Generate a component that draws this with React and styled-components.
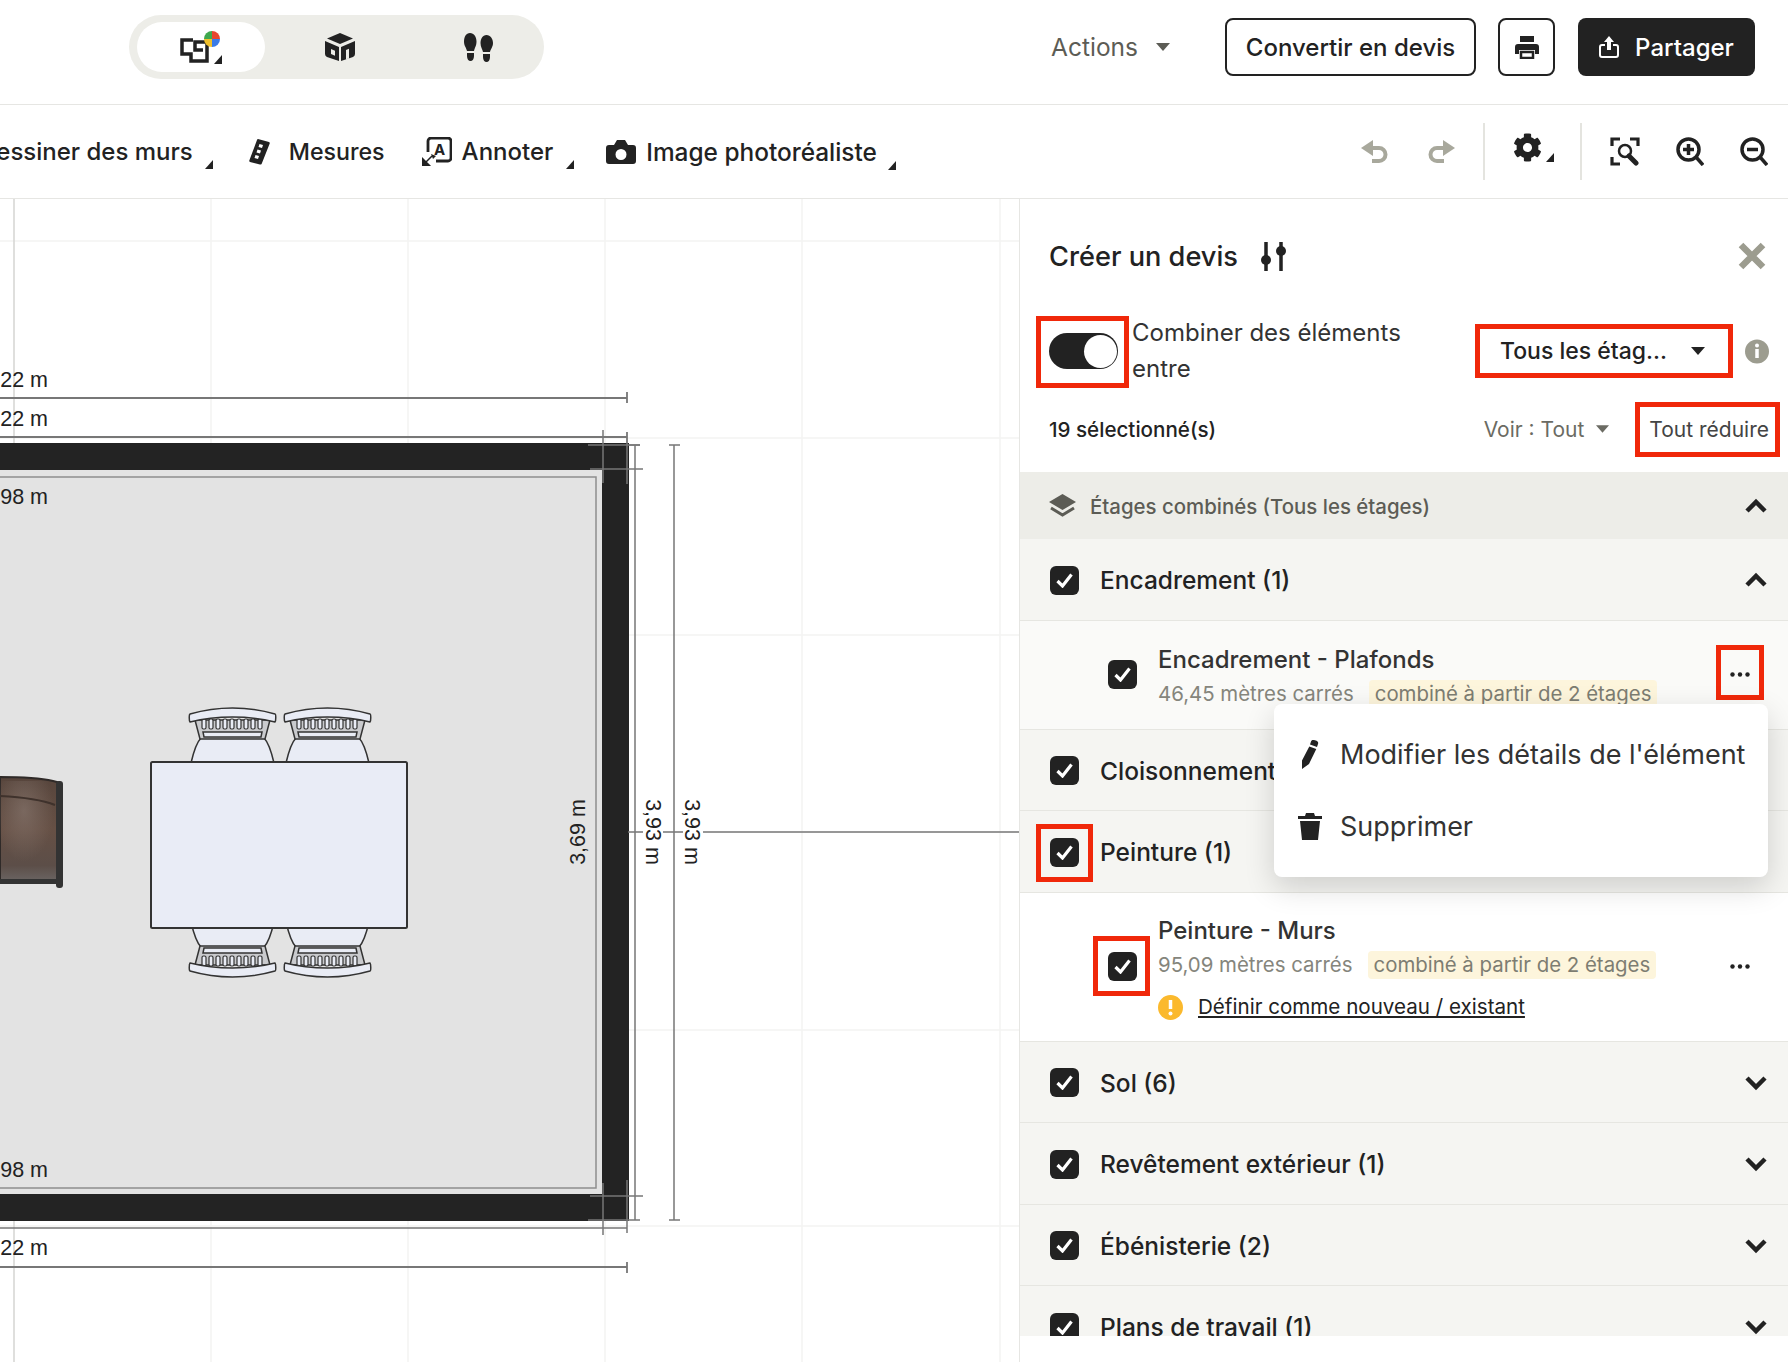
import styled, { createGlobalStyle } from "styled-components";
import { FaCog } from "react-icons/fa";

const GlobalStyle = createGlobalStyle`
  html, body { margin: 0; padding: 0; background: #fff; }
  body { font-family: Inter, "Noto Sans", sans-serif; color: #222; }
`;

const Check = () => (
  <svg width="17" height="15" viewBox="0 0 17 15">
    <path d="M1.500 8l5 5L15.500 1.500" fill="none" stroke="#fff" strokeWidth="3.200" />
  </svg>
);

const Chevron = ({ up }) => (
  <svg width="24" height="16" viewBox="0 0 24 16">
    <path d={up ? "M3 13l9-9 9 9" : "M3 3l9 9 9-9"} fill="none" stroke="#222" strokeWidth="4.500" />
  </svg>
);

const Caret = ({ color = "#222", w = 14 }) => (
  <svg width={w} height="8" viewBox="0 0 14 8">
    <path d="M0 0h14L7 8z" fill={color} />
  </svg>
);

const Corner = () => (
  <svg width="8" height="9" viewBox="0 0 8 9">
    <path d="M8 0v9H0z" fill="#222" />
  </svg>
);

const Dots = () => (
  <svg width="20" height="5" viewBox="0 0 20 5">
    <circle cx="2.500" cy="2.500" r="2.200" fill="#222" />
    <circle cx="10" cy="2.500" r="2.200" fill="#222" />
    <circle cx="17.500" cy="2.500" r="2.200" fill="#222" />
  </svg>
);

const PlanIcon = () => (
  <svg width="42" height="33" viewBox="0 0 42 33">
    <path d="M13 9H2v14h9v7h16V11H15v8h8" fill="none" stroke="#222" strokeWidth="3.500" />
    <path d="M32 0a8 8 0 0 1 8 8h-8z" fill="#e8452f" />
    <path d="M40 8a8 8 0 0 1-8 8V8z" fill="#3a7be8" />
    <path d="M32 16a8 8 0 0 1-8-8h8z" fill="#f0c02c" />
    <path d="M24 8a8 8 0 0 1 8-8v8z" fill="#3fa84f" />
    <path d="M42 24v9h-8z" fill="#222" />
  </svg>
);

const BoxIcon = () => (
  <svg width="30" height="28" viewBox="0 0 30 28">
    <path d="M15 0l13 5.500L15 11 2 5.500z" fill="#222" />
    <path fillRule="evenodd" d="M0 8l14 6v14L2 24q-2-1-2-3zM6 16v5l4 1.700v-5zM30 8v13q0 2-2 3l-12 4V14zM21 17v9.300l3-1V15.700z" fill="#222" />
  </svg>
);

const StepsIcon = () => (
  <svg width="29" height="29" viewBox="0 0 29 29">
    <path d="M6 0c4 0 6.500 4 6.500 8.500S10.500 15 10 18H3c-.5-3-3-5-3-9.500S2 0 6 0zM3 20h7v3c0 3-1.500 5-3.500 5S3 26 3 23z" fill="#222" />
    <path d="M22.500 2c4 0 6.500 4 6.500 8s-2.500 6-3 9h-7c-.5-3-2.500-5-2.500-9s2-8 6-8zM19 21h7v3c0 3-1.500 5-3.500 5S19 27 19 24z" fill="#222" />
  </svg>
);

const PrintIcon = () => (
  <svg width="24" height="23" viewBox="0 0 24 23">
    <path d="M5 0h14v6H5zM3 8h18a3 3 0 0 1 3 3v7h-4v-4H4v4H0v-7a3 3 0 0 1 3-3z" fill="#222" />
    <path d="M6 16h12v6H6z" fill="none" stroke="#222" strokeWidth="2.500" />
  </svg>
);

const ShareIcon = () => (
  <svg width="20" height="22" viewBox="0 0 20 22">
    <path d="M6 9H3a2 2 0 0 0-2 2v8a2 2 0 0 0 2 2h14a2 2 0 0 0 2-2v-8a2 2 0 0 0-2-2h-3" fill="none" stroke="#fff" strokeWidth="2" />
    <path d="M10 0l5 6h-3v8H8V6H5z" fill="#fff" />
  </svg>
);

const RulerIcon = () => (
  <svg width="21" height="26" viewBox="0 0 21 26">
    <path d="M9 0l11 3q1 .5 .7 1.500L13 24q-.5 2-2 1.500L1 23q-1-.5-.7-1.500L8 1q.3-1 1-1z" fill="#222" />
    <path d="M10.500 5l3.500 1-1 3-3.500-1zM8.500 10.500l3.500 1-1 3-3.500-1zM6.500 16l3.500 1-1 3-3.500-1z" fill="#fff" />
  </svg>
);

const AnnotIcon = () => (
  <svg width="30" height="29" viewBox="0 0 30 29">
    <path d="M6 15V4a3 3 0 0 1 3-3h17a3 3 0 0 1 3 3v17a3 3 0 0 1-3 3H14" fill="none" stroke="#222" strokeWidth="2.800" />
    <text x="17.500" y="18" textAnchor="middle" fontFamily="Inter, sans-serif" fontSize="15" fontWeight="700" fill="#222">A</text>
    <path d="M0 29v-8l8 8zM3 26l7-7" fill="#222" stroke="#222" strokeWidth="1.500" />
    <path d="M11 22l-2-5 5 2z" fill="#222" />
  </svg>
);

const CameraIcon = () => (
  <svg width="30" height="24" viewBox="0 0 30 24">
    <path fillRule="evenodd" d="M3 5h5l3-5h8l3 5h5a3 3 0 0 1 3 3v13a3 3 0 0 1-3 3H3a3 3 0 0 1-3-3V8a3 3 0 0 1 3-3zm12 4a5.500 5.500 0 1 0 0 11 5.500 5.500 0 0 0 0-11z" fill="#222" />
  </svg>
);

const HistoryIcon = ({ flip }) => (
  <svg width="27" height="23" viewBox="0 0 27 23" style={flip ? { transform: "scaleX(-1)" } : undefined}>
    <path d="M0 8L12 0v16z" fill="#a8a89c" />
    <path d="M10 8h8a6.500 6.500 0 0 1 0 13h-7" fill="none" stroke="#a8a89c" strokeWidth="4" />
  </svg>
);

const FitIcon = () => (
  <svg width="30" height="29" viewBox="0 0 30 29">
    <path d="M2 9V2h8M20 2h8v7M2 20v7h8" fill="none" stroke="#222" strokeWidth="3.200" />
    <circle cx="15" cy="14" r="6" fill="none" stroke="#222" strokeWidth="2.500" />
    <path d="M19 19l7 7" stroke="#222" strokeWidth="5" strokeLinecap="round" />
  </svg>
);

const ZoomIcon = ({ plus }) => (
  <svg width="28" height="29" viewBox="0 0 28 29">
    <circle cx="12.500" cy="12.500" r="10.500" fill="none" stroke="#222" strokeWidth="3.500" />
    <path d={plus ? "M7 12.500h11M12.500 7v11" : "M7 12.500h11"} stroke="#222" strokeWidth="3.500" />
    <path d="M20 20l7 8" stroke="#222" strokeWidth="3.500" />
  </svg>
);

const SlidersIcon = () => (
  <svg width="26" height="29" viewBox="0 0 26 29">
    <path d="M5 0v29M20 0v29" stroke="#222" strokeWidth="3.500" />
    <circle cx="5" cy="18" r="5" fill="#222" />
    <circle cx="20" cy="9" r="5" fill="#222" />
  </svg>
);

const CloseIcon = () => (
  <svg width="28" height="28" viewBox="0 0 28 28">
    <path d="M3 3l22 22M25 3L3 25" stroke="#9c9c8f" strokeWidth="6.500" />
  </svg>
);

const InfoIcon = () => (
  <svg width="24" height="25" viewBox="0 0 24 25">
    <circle cx="12" cy="12.500" r="12" fill="#9c9c8f" />
    <circle cx="12" cy="6.500" r="2" fill="#fff" />
    <path d="M12 10v9" stroke="#fff" strokeWidth="3.500" />
  </svg>
);

const LayersIcon = () => (
  <svg width="27" height="24" viewBox="0 0 27 24">
    <path d="M13.500 0L27 8l-13.500 8L0 8z" fill="#5c5c55" />
    <path d="M2 14l11.500 7L25 14" fill="none" stroke="#5c5c55" strokeWidth="3" />
  </svg>
);

const WarnIcon = () => (
  <svg width="25" height="25" viewBox="0 0 25 25">
    <circle cx="12.500" cy="12.500" r="12.500" fill="#fbb92d" />
    <path d="M12.500 5v9" stroke="#fff" strokeWidth="3.500" />
    <circle cx="12.500" cy="18.500" r="2" fill="#fff" />
  </svg>
);

const PenIcon = () => (
  <svg width="18" height="29" viewBox="0 0 18 29">
    <path d="M12 0c3 0 6 1.500 5 4l-1 3-7-2.500 1-3C10.400.500 11 0 12 0zM8.300 6.500l7 2.500L8 24l-7 5 0-8.500z" fill="#222" />
  </svg>
);

const TrashIcon = () => (
  <svg width="24" height="27" viewBox="0 0 24 27">
    <path d="M8 0h8l1 3h7v3H0V3h7zM2 8h20l-2 19H4z" fill="#222" />
  </svg>
);

const Chair = ({ x, y, flip }) => {
  const slats = [13, 20, 27, 34, 41, 48, 55, 62, 69];
  return (
    <g transform={flip ? `translate(${x} ${y}) scale(1 -1)` : `translate(${x} ${y})`}>
      <path d="M2 55C5 42 9 33 12 30h63c3 3 7 12 10 25z" fill="#e9ecf5" stroke="#333" strokeWidth="1.500" />
      <path d="M6 12l5 19h65l5-19z" fill="#c9cacd" stroke="#333" strokeWidth="1.500" />
      <path d="M14 24h59l-1 5H15z" fill="#e9ecf5" stroke="#333" strokeWidth="1.500" />
      {slats.map((s) => (
        <rect key={s} x={s} y="11" width="4" height="10" rx="1.500" fill="#e9ecf5" stroke="#333" strokeWidth="1.200" />
      ))}
      <path d="M1 6C15 2 30 0 43.500 0S72 2 86 6c1 0 1 7 0 8-12-3-28-5-42.500-5S13 11 1 14c-1-1-1-8 0-8z" fill="#e9ecf5" stroke="#333" strokeWidth="1.500" />
    </g>
  );
};

const DimLine = ({ d, w = 1.5, c = "#777" }) => <path d={d} stroke={c} strokeWidth={w} fill="none" />;

const FloorPlan = () => (
  <Plan viewBox="0 199 1019 1163">
    <defs>
      <linearGradient id="leather" x1="0" y1="0" x2="0" y2="1">
        <stop offset="0" stopColor="#57453c" />
        <stop offset="0.5" stopColor="#665045" />
        <stop offset="0.85" stopColor="#5c4e48" />
        <stop offset="1" stopColor="#6a6462" />
      </linearGradient>
      <radialGradient id="sheen" cx="0.4" cy="0.3" r="0.5">
        <stop offset="0" stopColor="#8a7a72" stopOpacity="0.6" />
        <stop offset="1" stopColor="#8a7a72" stopOpacity="0" />
      </radialGradient>
    </defs>
    {[211, 408, 605, 802, 1000].map((x) => (
      <line key={x} x1={x} y1="199" x2={x} y2="1362" stroke="#f3f3f2" strokeWidth="1.500" />
    ))}
    {[241, 438, 635, 832, 1030, 1226].map((y) => (
      <line key={y} x1="0" y1={y} x2="1019" y2={y} stroke="#f3f3f2" strokeWidth="1.500" />
    ))}
    <line x1="14" y1="199" x2="14" y2="1362" stroke="#d4d4d2" strokeWidth="1.500" />

    <rect x="0" y="443" width="629" height="778" fill="#232323" />
    <rect x="0" y="470" width="602" height="724" fill="#e3e3e3" />
    <DimLine d="M0 477H596V1188H0" c="#8e8e8e" />

    <DimLine d="M0 398H627M627 392V403" w="1.800" />
    <DimLine d="M0 437H627M627 432V443" w="1.800" />
    <DimLine d="M603 430V483M627 443V484M588 445H640M590 469H643" />
    <DimLine d="M635 445V1220M629 445H640M674 445V1220M669 445H680" />
    <DimLine d="M0 1228H627M627 1180V1233M603 1183V1235M590 1196H643M588 1220H640" w="1.500" />
    <DimLine d="M669 1220H680" />
    <DimLine d="M0 1267H627M627 1262V1273" w="1.800" />
    <DimLine d="M628 832H1019" />

    <rect x="643" y="798" width="20" height="68" fill="#fff" />
    <rect x="683" y="798" width="20" height="68" fill="#fff" />

    <DimText x="48" y="387" textAnchor="end">22 m</DimText>
    <DimText x="48" y="426" textAnchor="end">22 m</DimText>
    <DimText x="48" y="504" textAnchor="end">98 m</DimText>
    <DimText x="48" y="1177" textAnchor="end">98 m</DimText>
    <DimText x="48" y="1255" textAnchor="end">22 m</DimText>
    <DimText transform="translate(585 832) rotate(-90)" textAnchor="middle">3,69 m</DimText>
    <DimText transform="translate(646 832) rotate(90)" textAnchor="middle">3,93 m</DimText>
    <DimText transform="translate(685 832) rotate(90)" textAnchor="middle">3,93 m</DimText>

    <Chair x={189} y={708} />
    <Chair x={284} y={708} />
    <Chair x={189} y={977} flip />
    <Chair x={284} y={977} flip />
    <rect x="151" y="762" width="256" height="166" rx="1.500" fill="#e9ecf6" stroke="#333" strokeWidth="2" />

    <path d="M0 777c20 0 40 1 53 4l8 2v98H0z" fill="url(#leather)" stroke="#2f2a28" strokeWidth="2" />
    <path d="M0 781h60v100H0z" fill="url(#sheen)" />
    <path d="M0 796c20 1 40 3 55 9" fill="none" stroke="#3f322c" strokeWidth="2" />
    <rect x="0" y="879" width="61" height="5" fill="#333" />
    <rect x="56" y="781" width="7" height="107" rx="3" fill="#333" />
  </Plan>
);

const GROUPS_BOTTOM = ["Sol (6)", "Revêtement extérieur (1)", "Ébénisterie (2)", "Plans de travail (1)"];

export default function App() {
  return (
    <Page>
      <GlobalStyle />
      <Header>
        <ViewSwitch>
          <ViewTab $active $width={128}><PlanIcon /></ViewTab>
          <ViewTab $width={150}><BoxIcon /></ViewTab>
          <ViewTab $width={126}><StepsIcon /></ViewTab>
        </ViewSwitch>
        <HeaderRight>
          <ActionsMenu>Actions <Caret color="#5c5c55" /></ActionsMenu>
          <OutlineButton>Convertir en devis</OutlineButton>
          <IconButton><PrintIcon /></IconButton>
          <DarkButton><ShareIcon /> Partager</DarkButton>
        </HeaderRight>
      </Header>

      <Toolbar>
        <ToolGroup>
          <Tool $offset={-21}>Dessiner des murs<CornerWrap><Corner /></CornerWrap></Tool>
          <Tool $offset={36} $gap={19} $size={23.2}><RulerIcon />Mesures</Tool>
          <Tool $offset={37} $gap={10}><AnnotIcon />Annoter<CornerWrap $ml={3}><Corner /></CornerWrap></Tool>
          <Tool $offset={32} $gap={10} $size={24.4}><CameraIcon />Image photoréaliste<CornerWrap $ml={1}><Corner /></CornerWrap></Tool>
        </ToolGroup>
        <ToolIcons>
          <HistoryPair>
            <HistoryIcon />
            <HistoryIcon flip />
          </HistoryPair>
          <Separator />
          <GearWrap><FaCog size={29} color="#222" /><Corner /></GearWrap>
          <Separator />
          <FitIcon />
          <ZoomIcon plus />
          <ZoomIcon />
        </ToolIcons>
      </Toolbar>

      <Main>
        <Canvas><FloorPlan /></Canvas>
        <Panel>
          <TitleRow>
            <Title>Créer un devis</Title>
            <SlidersIcon />
            <CloseWrap><CloseIcon /></CloseWrap>
          </TitleRow>

          <CombineRow>
            <Marked $inset="-17px -11px -19px -13px">
              <Toggle><Knob /></Toggle>
            </Marked>
            <CombineText>Combiner des éléments entre</CombineText>
            <Marked $inset="-13px -28px -13px -25px">
              <FloorSelect>Tous les étag... <Caret /></FloorSelect>
            </Marked>
            <InfoSlot><InfoIcon /></InfoSlot>
          </CombineRow>

          <FilterRow>
            <Selected>19 sélectionné(s)</Selected>
            <FilterRight>
              <ViewFilter>Voir : Tout <Caret color="#6b6b63" w={13} /></ViewFilter>
              <Marked $inset="-15px -11px -15px -14px">
                <Collapse>Tout réduire</Collapse>
              </Marked>
            </FilterRight>
          </FilterRow>

          <List>
            <SectionHead>
              <LayersIcon />
              <SectionLabel>Étages combinés (Tous les étages)</SectionLabel>
              <ChevronSlot><Chevron up /></ChevronSlot>
            </SectionHead>

            <GroupRow>
              <CheckBox><Check /></CheckBox>
              <GroupLabel>Encadrement (1)</GroupLabel>
              <ChevronSlot><Chevron up /></ChevronSlot>
            </GroupRow>

            <ItemRow $bg="#fafaf8" $height={109}>
              <CheckBox><Check /></CheckBox>
              <ItemBody>
                <ItemTitle>Encadrement - Plafonds</ItemTitle>
                <ItemMeta>46,45 mètres carrés<Tag>combiné à partir de 2 étages</Tag></ItemMeta>
              </ItemBody>
              <DotsSlot>
                <Marked $inset="-27px -14px -23px -14px"><Dots /></Marked>
              </DotsSlot>
            </ItemRow>

            <GroupRow>
              <CheckBox><Check /></CheckBox>
              <GroupLabel>Cloisonnement</GroupLabel>
            </GroupRow>

            <GroupRow>
              <Marked $inset="-14px -14px -15px -14px"><CheckBox><Check /></CheckBox></Marked>
              <GroupLabel>Peinture (1)</GroupLabel>
            </GroupRow>

            <ItemRow $bg="#fff" $height={149}>
              <Marked $inset="-16px -13px -15px -15px"><CheckBox><Check /></CheckBox></Marked>
              <ItemBody>
                <ItemTitle>Peinture - Murs</ItemTitle>
                <ItemMeta>95,09 mètres carrés<Tag>combiné à partir de 2 étages</Tag></ItemMeta>
                <WarnRow><WarnIcon /><WarnLink>Définir comme nouveau / existant</WarnLink></WarnRow>
              </ItemBody>
              <DotsSlot><Dots /></DotsSlot>
            </ItemRow>

            {GROUPS_BOTTOM.map((g) => (
              <GroupRow key={g}>
                <CheckBox><Check /></CheckBox>
                <GroupLabel>{g}</GroupLabel>
                <ChevronSlot><Chevron /></ChevronSlot>
              </GroupRow>
            ))}
          </List>

          <Menu>
            <MenuItem><MenuIcon><PenIcon /></MenuIcon>Modifier les détails de l'élément</MenuItem>
            <MenuItem><MenuIcon><TrashIcon /></MenuIcon>Supprimer</MenuItem>
          </Menu>
        </Panel>
      </Main>
    </Page>
  );
}

const Page = styled.div`
  width: 1788px;
  height: 1362px;
  display: flex;
  flex-direction: column;
  overflow: hidden;
  background: #fff;
`;

const Header = styled.header`
  height: 105px;
  flex: none;
  box-sizing: border-box;
  border-bottom: 1.5px solid #e6e6e3;
  display: flex;
  align-items: center;
  justify-content: space-between;
  padding: 0 33px 10px 129px;
`;

const ViewSwitch = styled.div`
  width: 415px;
  height: 64px;
  box-sizing: border-box;
  padding: 7px 8px;
  background: #edede8;
  border-radius: 32px;
  display: flex;
  align-items: center;
`;

const ViewTab = styled.div`
  width: ${(p) => p.$width}px;
  flex: none;
  height: 50px;
  border-radius: 25px;
  background: ${(p) => (p.$active ? "#fff" : "transparent")};
  display: flex;
  align-items: center;
  justify-content: center;
`;

const HeaderRight = styled.div`
  display: flex;
  align-items: center;
`;

const ActionsMenu = styled.div`
  display: flex;
  align-items: center;
  gap: 18px;
  font-size: 24.5px;
  color: #5c5c55;
  margin-right: 55px;
`;

const OutlineButton = styled.button`
  width: 251px;
  height: 58px;
  border: 2px solid #222;
  border-radius: 8px;
  background: #fff;
  color: #222;
  font: 500 24px Inter, sans-serif;
  padding: 0;
`;

const IconButton = styled(OutlineButton)`
  width: 57px;
  margin-left: 22px;
  display: flex;
  align-items: center;
  justify-content: center;
`;

const DarkButton = styled.button`
  width: 177px;
  height: 58px;
  margin-left: 23px;
  border: none;
  border-radius: 8px;
  background: #222;
  color: #fff;
  font: 500 24px Inter, sans-serif;
  display: flex;
  align-items: center;
  justify-content: center;
  gap: 16px;
  padding: 0;
`;

const Toolbar = styled.div`
  height: 94px;
  flex: none;
  box-sizing: border-box;
  border-bottom: 1.5px solid #e6e6e3;
  display: flex;
  align-items: center;
  justify-content: space-between;
  padding-right: 20px;
  overflow: hidden;
`;

const ToolGroup = styled.div`
  display: flex;
  align-items: center;
`;

const Tool = styled.div`
  position: relative;
  display: flex;
  align-items: center;
  gap: ${(p) => p.$gap || 17}px;
  font-size: ${(p) => p.$size || 24}px;
  font-weight: 500;
  color: #222;
  margin-left: ${(p) => p.$offset}px;
  white-space: nowrap;
`;

const CornerWrap = styled.span`
  display: flex;
  align-self: flex-end;
  margin-left: ${(p) => p.$ml ?? -5}px;
  margin-bottom: -3px;
`;

const ToolIcons = styled.div`
  display: flex;
  align-items: center;
  gap: 36px;
`;

const HistoryPair = styled.div`
  display: flex;
  gap: 40px;
`;

const Separator = styled.div`
  width: 2px;
  height: 57px;
  background: #e4e4df;
  margin: 0 -8px;
`;

const GearWrap = styled.div`
  display: flex;
  align-items: flex-end;
  gap: 4px;
  margin: 0 -2px 8px 0;
`;

const Main = styled.div`
  flex: 1;
  display: flex;
  min-height: 0;
`;

const Canvas = styled.div`
  width: 1019px;
  flex: none;
`;

const Plan = styled.svg`
  display: block;
  width: 1019px;
  height: 1163px;
`;

const DimText = styled.text`
  font-family: "Liberation Sans", sans-serif;
  font-size: 21.5px;
  fill: #222;
`;

const Panel = styled.aside`
  position: relative;
  flex: 1;
  box-sizing: border-box;
  border-left: 1.5px solid #e6e6e3;
  display: flex;
  flex-direction: column;
  height: 1163px;
`;

const TitleRow = styled.div`
  height: 114px;
  flex: none;
  box-sizing: border-box;
  padding: 0 22px 0 29px;
  display: flex;
  align-items: center;
  gap: 23px;
`;

const Title = styled.h2`
  margin: 0;
  font-size: 27.2px;
  font-weight: 500;
  color: #222;
`;

const CloseWrap = styled.div`
  margin-left: auto;
  display: flex;
`;

const CombineRow = styled.div`
  height: 76px;
  flex: none;
  box-sizing: border-box;
  padding: 0 19px 0 29px;
  display: flex;
  align-items: center;
`;

const Marked = styled.span`
  position: relative;
  display: inline-flex;
  flex: none;
  &::after {
    content: "";
    position: absolute;
    inset: ${(p) => p.$inset};
    border: 5px solid #f0280a;
    pointer-events: none;
  }
`;

const Toggle = styled.span`
  width: 69px;
  height: 36px;
  border-radius: 18px;
  background: #222;
  display: flex;
  align-items: center;
  justify-content: flex-end;
  padding-right: 1px;
  box-sizing: border-box;
`;

const Knob = styled.span`
  width: 33px;
  height: 33px;
  border-radius: 50%;
  background: #fff;
`;

const CombineText = styled.div`
  width: 290px;
  flex: none;
  margin: 0 78px 0 14px;
  font-size: 24px;
  line-height: 36px;
  color: #333;
`;

const FloorSelect = styled.div`
  width: 205px;
  display: flex;
  align-items: center;
  justify-content: space-between;
  font-size: 23px;
  font-weight: 500;
  color: #222;
  white-space: nowrap;
`;

const InfoSlot = styled.div`
  margin-left: auto;
  display: flex;
`;

const FilterRow = styled.div`
  height: 83px;
  flex: none;
  box-sizing: border-box;
  padding: 0 19px 3px 29px;
  display: flex;
  align-items: center;
  justify-content: space-between;
  font-size: 21px;
`;

const Selected = styled.div`
  font-size: 20.6px;
  font-weight: 500;
  color: #222;
`;

const FilterRight = styled.div`
  display: flex;
  align-items: center;
  gap: 40px;
`;

const ViewFilter = styled.div`
  display: flex;
  align-items: center;
  gap: 12px;
  color: #6b6b63;
`;

const Collapse = styled.div`
  color: #444;
`;

const List = styled.div`
  height: 864px;
  flex: none;
  overflow: hidden;
`;

const SectionHead = styled.div`
  height: 67px;
  box-sizing: border-box;
  background: #edede8;
  padding: 1px 20px 0 29px;
  display: flex;
  align-items: center;
  gap: 14px;
`;

const SectionLabel = styled.div`
  font-size: 20.4px;
  font-weight: 500;
  color: #5c5c55;
`;

const ChevronSlot = styled.div`
  margin-left: auto;
  display: flex;
`;

const GroupRow = styled.div`
  height: 81.5px;
  box-sizing: border-box;
  background: #f5f5f2;
  border-bottom: 1.5px solid #e6e6e1;
  padding: 2px 20px 0 30px;
  display: flex;
  align-items: center;
  gap: 21px;
  flex: none;
`;

const GroupLabel = styled.div`
  font-size: 24.5px;
  font-weight: 500;
  color: #222;
  white-space: nowrap;
`;

const CheckBox = styled.span`
  width: 29px;
  height: 29px;
  flex: none;
  border-radius: 6px;
  background: #222;
  display: flex;
  align-items: center;
  justify-content: center;
`;

const ItemRow = styled.div`
  height: ${(p) => p.$height}px;
  box-sizing: border-box;
  background: ${(p) => p.$bg};
  border-bottom: 1.5px solid #e6e6e1;
  padding: 0 38px 0 88px;
  display: flex;
  align-items: center;
  gap: 21px;
`;

const ItemBody = styled.div`
  display: flex;
  flex-direction: column;
  padding-top: 5px;
`;

const ItemTitle = styled.div`
  font-size: 24px;
  font-weight: 500;
  line-height: 34px;
  color: #333;
`;

const ItemMeta = styled.div`
  display: flex;
  align-items: center;
  font-size: 20.4px;
  line-height: 34px;
  color: #85857c;
`;

const Tag = styled.span`
  margin-left: 15px;
  padding: 0 6px;
  height: 28px;
  line-height: 28px;
  border-radius: 4px;
  background: #fdf5dc;
  color: #7d7d72;
`;

const WarnRow = styled.div`
  margin-top: 8px;
  display: flex;
  align-items: center;
  gap: 15px;
`;

const WarnLink = styled.a`
  font-size: 20.6px;
  line-height: 34px;
  color: #222;
  text-decoration: underline;
`;

const DotsSlot = styled.div`
  margin-left: auto;
  display: flex;
`;

const Menu = styled.div`
  position: absolute;
  left: 254px;
  top: 505px;
  width: 494px;
  height: 173px;
  box-sizing: border-box;
  padding-left: 15px;
  background: #fff;
  border-radius: 8px;
  box-shadow: 0 10px 30px rgba(0, 0, 0, 0.16);
  display: flex;
  flex-direction: column;
  justify-content: center;
  gap: 30px;
`;

const MenuItem = styled.div`
  display: flex;
  align-items: center;
  font-size: 27px;
  line-height: 42px;
  color: #333;
  white-space: nowrap;
`;

const MenuIcon = styled.span`
  width: 42px;
  padding-right: 9px;
  display: flex;
  justify-content: center;
`;
